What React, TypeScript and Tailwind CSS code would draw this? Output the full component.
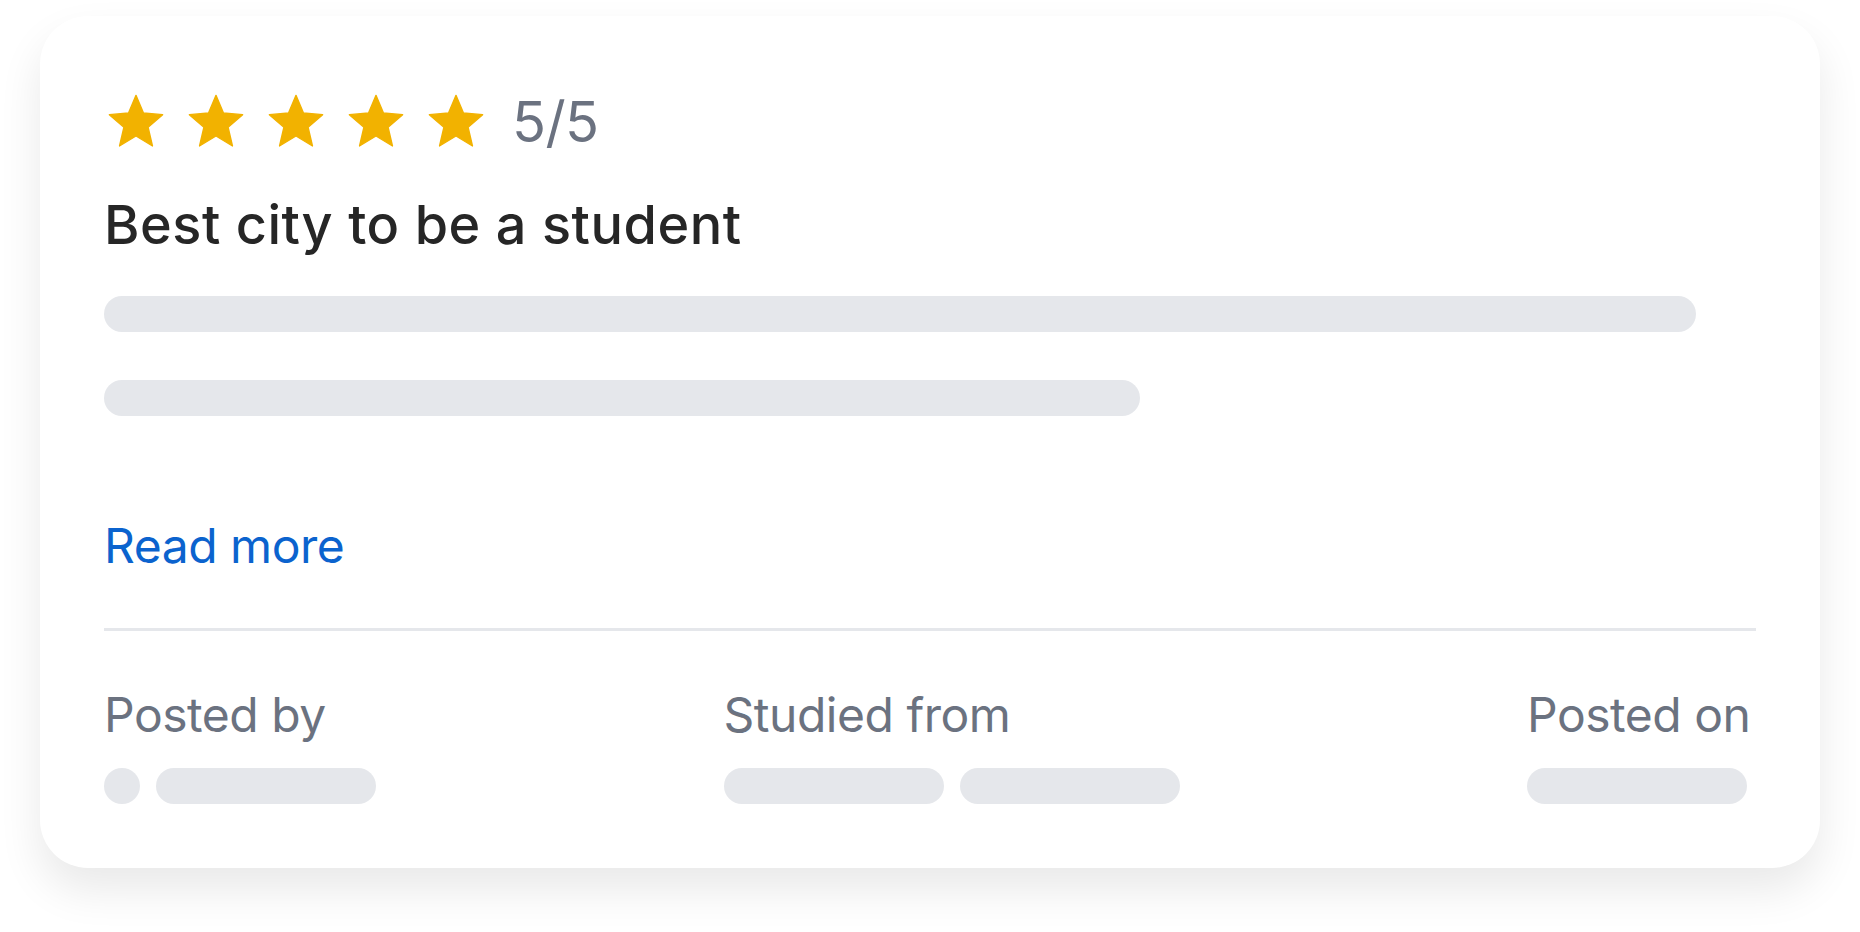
import React from 'react';

const Star: React.FC = () => (
  <svg width="64" height="64" viewBox="0 0 24 24" aria-hidden="true">
    <path
      d="M12 17.27L18.18 21l-1.64-7.03L22 9.24l-7.19-.61L12 2 9.19 8.63 2 9.24l5.46 4.73L5.82 21z"
      fill="#f2b200"
      stroke="#f2b200"
      strokeWidth="0.5"
      strokeLinejoin="round"
    />
  </svg>
);

const Bar: React.FC<{ className?: string }> = ({ className = '' }) => (
  <div className={`h-[36px] rounded-full bg-[#e5e7eb] ${className}`} />
);

export default function App() {
  return (
    <div className="min-h-screen bg-white px-10 pt-4 font-['Inter','Noto_Sans',sans-serif]">
      <div className="rounded-[48px] bg-white px-16 pt-16 pb-16 shadow-[0_22px_44px_rgba(0,0,0,0.09)]">
        {/* rating */}
        <div className="flex h-[84px] items-center gap-6">
          <div className="flex gap-4">
            {[0, 1, 2, 3, 4].map((i) => (
              <Star key={i} />
            ))}
          </div>
          <span className="text-[56px] leading-none tracking-[-0.01em] text-[#6b7280]">5/5</span>
        </div>

        <h2 className="mt-[34px] text-[54px] font-medium leading-none tracking-[0.01em] text-[#262626]">
          Best city to be a student
        </h2>

        {/* body placeholder */}
        <Bar className="mt-[44px] w-[1592px]" />
        <Bar className="mt-[48px] w-[1036px]" />

        <a href="#" className="mt-[106px] block text-[48px] leading-none tracking-[-0.01em] text-[#0b63ce]">
          Read more
        </a>

        <div className="mt-[58px] h-[3px] bg-[#e5e7eb]" />

        <div className="mt-[60px] flex justify-between">
          <div className="flex flex-col items-start">
            <span className="text-[48px] leading-none tracking-[-0.01em] text-[#6b7280]">Posted by</span>
            <div className="mt-[29px] flex items-center gap-4">
              <div className="h-[36px] w-[36px] rounded-full bg-[#e5e7eb]" />
              <Bar className="w-[220px]" />
            </div>
          </div>
          <div className="flex flex-col items-start">
            <span className="text-[48px] leading-none tracking-[-0.01em] text-[#6b7280]">Studied from</span>
            <div className="mt-[29px] flex gap-4">
              <Bar className="w-[220px]" />
              <Bar className="w-[220px]" />
            </div>
          </div>
          <div className="flex w-[229px] flex-col items-start">
            <span className="text-[48px] leading-none tracking-[-0.01em] text-[#6b7280]">Posted on</span>
            <div className="mt-[29px] flex">
              <Bar className="w-[220px]" />
            </div>
          </div>
        </div>
      </div>
    </div>
  );
}
